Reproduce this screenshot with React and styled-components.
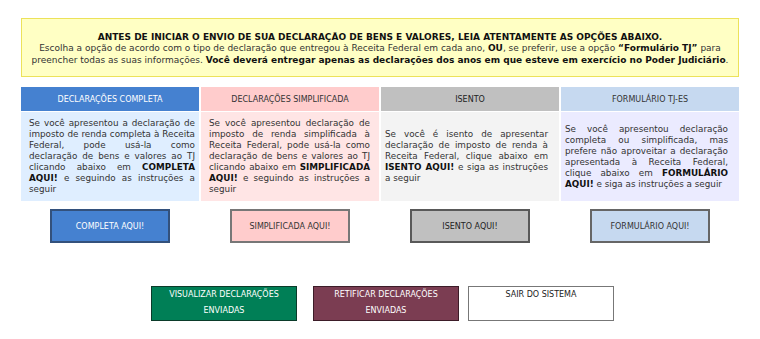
import React from 'react'
import styled, { createGlobalStyle } from 'styled-components';

const GlobalStyle = createGlobalStyle`
    html, body {
        margin: 0;
        padding: 0;
        background: #fff;
    }
    body {
        font-family: "DejaVu Sans", Verdana, sans-serif;
        color: #333;
    }
`;

const Page = styled.div`
    width: 760px;
    box-sizing: border-box;
    padding: 18px 21px 0;
`;

const Notice = styled.div`
    background: #ffffc4;
    border: 1px solid #ece25a;
    padding: 12px 4px 10px;
    text-align: center;
    font-size: 9px;
    color: #333;
    b{
        color: #111;
    }
    .title{
        line-height: 12px;
    }
    .body{
        line-height: 11.5px;
    }
`;

const Options = styled.div`
    display: grid;
    grid-template-columns: repeat(4, 1fr);
    column-gap: 2px;
    margin-top: 10px;
`;

const Column = styled.div`
    display: flex;
    flex-direction: column;
    align-items: stretch;
`;

const Head = styled.div`
    height: 24px;
    display: flex;
    align-items: center;
    justify-content: center;
    background: ${p => p.$bg};
    color: ${p => p.$fg};
    font-size: 8px;
`;

const Body = styled.div`
    margin-top: 1px;
    height: 89px;
    display: flex;
    align-items: center;
    box-sizing: border-box;
    padding: 0 ${p => p.$right}px 0 ${p => p.$left}px;
    background: ${p => p.$bg};
    p{
        margin: 0;
        font-size: 8.8px;
        line-height: 11px;
        text-align: justify;
        color: #333;
    }
    b{
        color: #111;
    }
`;

const PickButton = styled.a`
    display: flex;
    align-items: center;
    justify-content: center;
    box-sizing: border-box;
    width: 120px;
    height: 34px;
    margin: 8px auto 0;
    background: ${p => p.$bg};
    color: ${p => p.$fg};
    border: 2px solid ${p => p.$border};
    font-size: 8px;
    text-decoration: none;
    cursor: pointer;
`;

const Actions = styled.div`
    display: flex;
    margin-top: 43px;
    padding-left: 130px;
`;

const ActionButton = styled.a`
    box-sizing: border-box;
    width: 146px;
    height: 35px;
    margin-left: ${p => p.$gap}px;
    background: ${p => p.$bg};
    color: ${p => p.$fg};
    border: 1px solid ${p => p.$border};
    font-size: 8px;
    line-height: 16px;
    text-align: center;
    text-decoration: none;
    cursor: pointer;
`;

const options = [
    {
        head: 'DECLARAÇÕES COMPLETA', headBg: '#4581d0', headFg: '#fff', bodyBg: '#dfeeff', left: 8, right: 4,
        text: 'Se você apresentou a declaração de imposto de renda completa à Receita Federal, pode usá-la como declaração de bens e valores ao TJ clicando abaixo em ',
        strong: 'COMPLETA AQUI!', rest: ' e seguindo as instruções a seguir',
        btn: 'COMPLETA AQUI!', btnBg: '#4581d0', btnFg: '#fff', btnBorder: '#33517c',
    },
    {
        head: 'DECLARAÇÕES SIMPLIFICADA', headBg: '#ffcccc', headFg: '#333', bodyBg: '#ffe5e5', left: 8, right: 9,
        text: 'Se você apresentou declaração de imposto de renda simplificada à Receita Federal, pode usá-la como declaração de bens e valores ao TJ clicando abaixo em ',
        strong: 'SIMPLIFICADA AQUI!', rest: ' e seguindo as instruções a seguir',
        btn: 'SIMPLIFICADA AQUI!', btnBg: '#ffcccc', btnFg: '#333', btnBorder: '#777',
    },
    {
        head: 'ISENTO', headBg: '#c0c0c0', headFg: '#222', bodyBg: '#f3f3f3', left: 4, right: 11,
        text: 'Se você é isento de apresentar declaração de imposto de renda à Receita Federal, clique abaixo em ',
        strong: 'ISENTO AQUI!', rest: ' e siga as instruções a seguir',
        btn: 'ISENTO AQUI!', btnBg: '#c0c0c0', btnFg: '#222', btnBorder: '#595959',
    },
    {
        head: 'FORMULÁRIO TJ-ES', headBg: '#c6d9f0', headFg: '#333', bodyBg: '#ebebff', left: 4, right: 11,
        text: 'Se você apresentou declaração completa ou simplificada, mas prefere não aproveitar a declaração apresentada à Receita Federal, clique abaixo em ',
        strong: 'FORMULÁRIO AQUI!', rest: ' e siga as instruções a seguir',
        btn: 'FORMULÁRIO AQUI!', btnBg: '#c6d9f0', btnFg: '#333', btnBorder: '#666',
    },
];

export default function App() {
    return (
        <Page>
            <GlobalStyle />
            <Notice>
                <div className="title"><b>ANTES DE INICIAR O ENVIO DE SUA DECLARAÇÃO DE BENS E VALORES, LEIA ATENTAMENTE AS OPÇÕES ABAIXO.</b></div>
                <div className="body">
                    Escolha a opção de acordo com o tipo de declaração que entregou à Receita Federal em cada ano, <b>OU</b>, se preferir, use a opção <b>“Formulário TJ”</b> para preencher todas as suas informações. <b>Você deverá entregar apenas as declarações dos anos em que esteve em exercício no Poder Judiciário</b>.
                </div>
            </Notice>

            <Options>
                {options.map(o => (
                    <Column key={o.head}>
                        <Head $bg={o.headBg} $fg={o.headFg}>{o.head}</Head>
                        <Body $bg={o.bodyBg} $left={o.left} $right={o.right}>
                            <p>{o.text}<b>{o.strong}</b>{o.rest}</p>
                        </Body>
                        <PickButton $bg={o.btnBg} $fg={o.btnFg} $border={o.btnBorder}>{o.btn}</PickButton>
                    </Column>
                ))}
            </Options>

            <Actions>
                <ActionButton $gap={0} $bg="#007f56" $fg="#fff" $border="#0b3b2a">VISUALIZAR DECLARAÇÕES<br />ENVIADAS</ActionButton>
                <ActionButton $gap={16} $bg="#7b3d52" $fg="#fff" $border="#3c1c28">RETIFICAR DECLARAÇÕES<br />ENVIADAS</ActionButton>
                <ActionButton $gap={9} $bg="#fff" $fg="#222" $border="#777">SAIR DO SISTEMA</ActionButton>
            </Actions>
        </Page>
    )
}
